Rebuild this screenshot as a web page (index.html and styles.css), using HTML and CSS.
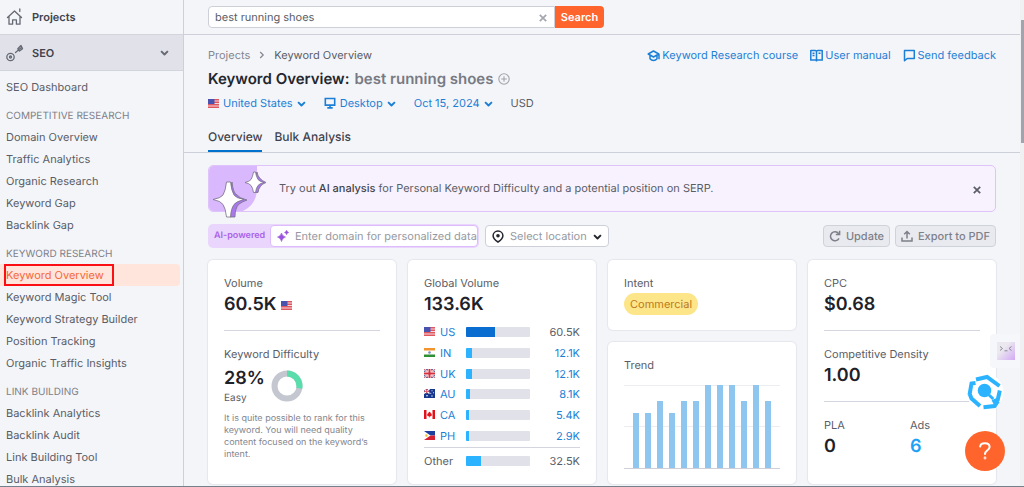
FILE: index.html
```html
<!DOCTYPE html>
<html lang="en">
<head>
<meta charset="utf-8">
<meta name="viewport" content="width=device-width, initial-scale=1">
<title>Keyword Overview: best running shoes</title>
<link rel="stylesheet" href="styles.css">
</head>
<body>
<svg class="defs" aria-hidden="true">
  <symbol id="flag-us" viewBox="0 0 22 18"><path fill="#f4d9dc" d="M0 0h22v18H0z"/><path fill="#e0565f" d="M0 0h22v3H0zM0 5h22v3H0zM0 10h22v3H0zM0 15h22v3H0z"/><path fill="#4a52b0" d="M0 0h13v10H0z"/></symbol>
  <symbol id="flag-in" viewBox="0 0 22 18"><path fill="#fff" d="M0 0h22v18H0z"/><path fill="#f3952f" d="M0 0h22v5H0z"/><path fill="#2f8f35" d="M0 13h22v5H0z"/><circle cx="11" cy="9" r="2.6" fill="#7a8cc4"/></symbol>
  <symbol id="flag-uk" viewBox="0 0 22 18"><path fill="#2c3f86" d="M0 0h22v18H0z"/><path stroke="#fff" stroke-width="4" d="M0 0l22 18M22 0L0 18"/><path stroke="#d3313f" stroke-width="1.6" d="M0 0l22 18M22 0L0 18"/><path stroke="#fff" stroke-width="7" d="M11 0v18M0 9h22"/><path stroke="#d3313f" stroke-width="4" d="M11 0v18M0 9h22"/></symbol>
  <symbol id="flag-au" viewBox="0 0 22 18"><path fill="#16378e" d="M0 0h22v18H0z"/><path stroke="#fff" stroke-width="3" d="M0 0l11 9M11 0L0 9"/><path stroke="#e05260" stroke-width="2" d="M5.500 0v9M0 4.500h11"/><g fill="#fff"><circle cx="6" cy="13.500" r="1.600"/><circle cx="16" cy="3.500" r="1.200"/><circle cx="19" cy="7.500" r="1.200"/><circle cx="13.500" cy="8.500" r="1.100"/><circle cx="16" cy="14" r="1.300"/></g></symbol>
  <symbol id="flag-ca" viewBox="0 0 22 18"><path fill="#fff" d="M0 0h22v18H0z"/><path fill="#e0131b" d="M0 0h5v18H0zM17 0h5v18h-5zM11 3l1.500 2.500 1.500-.5-.3 3L16 7l-.8 2.500 1 1-3.700 2.500H11.500V15h-1v-2H9.500L5.800 10.500l1-1L6 7l2.300 1-.3-3 1.500.5z"/></symbol>
  <symbol id="flag-ph" viewBox="0 0 22 18"><path fill="#1c3fa0" d="M0 0h22v9H0z"/><path fill="#d52334" d="M0 9h22v9H0z"/><path fill="#fff" d="M0 0l13 9L0 18z"/><circle cx="4.800" cy="9" r="2.400" fill="#f2c230"/></symbol>
  <symbol id="chev" viewBox="0 0 9 6"><path d="M1.100 1.100l3.400 3.400 3.400-3.400" fill="none" stroke="currentColor" stroke-width="1.900" stroke-linejoin="round"/></symbol>
  <symbol id="cross" viewBox="0 0 8 8"><path d="M.8.8l6.400 6.400M7.200.8L.8 7.200" fill="none" stroke="currentColor" stroke-width="1.700"/></symbol>
</svg>

<div class="app">
  <nav class="sidebar" aria-label="Main">
    <a class="section" href="#">
      <svg class="section-icon" viewBox="0 0 18 18" fill="none" stroke="currentColor" stroke-width="1.300" stroke-linecap="round" stroke-linejoin="round"><path d="M1.500 9.500L8.500 3l7 6.500M3 8.500v7.700h3.600v-4.400h3.800v4.400H14V8.500M13.800 1v2.400"/></svg>
      Projects
    </a>
    <a class="section section-open" href="#">
      <svg class="section-icon" viewBox="0 0 18 18" fill="none" stroke="currentColor" stroke-width="1.300" stroke-linecap="round" stroke-linejoin="round"><circle cx="4.500" cy="13" r="3.700"/><circle cx="4.500" cy="13" r="1"/><path d="M9.500 8.500l3-2.500M11.800 4.800l1.700 2.300 3-2.300-1.800-3zM13 5.500l2.500-2M15 1.500l1.500 3"/></svg>
      SEO
      <svg class="section-chev"><use href="#chev"/></svg>
    </a>
    <ul class="menu">
      <li><a href="#">SEO Dashboard</a></li>
    </ul>
    <h2 class="menu-title">COMPETITIVE RESEARCH</h2>
    <ul class="menu">
      <li><a href="#">Domain Overview</a></li>
      <li><a href="#">Traffic Analytics</a></li>
      <li><a href="#">Organic Research</a></li>
      <li><a href="#">Keyword Gap</a></li>
      <li><a href="#">Backlink Gap</a></li>
    </ul>
    <h2 class="menu-title">KEYWORD RESEARCH</h2>
    <ul class="menu">
      <li class="current"><a href="#" aria-current="page">Keyword Overview</a></li>
      <li><a href="#">Keyword Magic Tool</a></li>
      <li><a href="#">Keyword Strategy Builder</a></li>
      <li><a href="#">Position Tracking</a></li>
      <li><a href="#">Organic Traffic Insights</a></li>
    </ul>
    <h2 class="menu-title">LINK BUILDING</h2>
    <ul class="menu">
      <li><a href="#">Backlink Analytics</a></li>
      <li><a href="#">Backlink Audit</a></li>
      <li><a href="#">Link Building Tool</a></li>
      <li><a href="#">Bulk Analysis</a></li>
    </ul>
  </nav>

  <main class="main">
    <form class="topbar">
      <div class="search">
        <input class="search-input" type="text" value="best running shoes" aria-label="Keyword">
        <button class="search-clear" type="button" aria-label="Clear"><svg class="i8"><use href="#cross"/></svg></button>
        <button class="search-submit" type="button">Search</button>
      </div>
    </form>

    <header class="head">
      <div class="crumb-row">
        <nav class="crumbs" aria-label="Breadcrumb">
          <a href="#">Projects</a>
          <svg class="crumb-sep" viewBox="0 0 6 8"><path d="M1.200 1l3 3-3 3" fill="none" stroke="currentColor" stroke-width="1.200"/></svg>
          <span>Keyword Overview</span>
        </nav>
        <div class="help-links">
          <a href="#"><svg class="i13" viewBox="0 0 13 13" fill="none" stroke="currentColor" stroke-width="1.500" stroke-linejoin="round"><path d="M1.200 5l5.300-3 5.300 3-5.300 3zM3 6.500v3.300c1.800 2.200 5.200 2.200 7 0V6.500M12 5.200v5"/></svg>Keyword Research course</a>
          <a href="#"><svg class="i13" viewBox="0 0 13 13" fill="none" stroke="currentColor" stroke-width="1.500"><path d="M.8 1.500h4.400q1.300 0 1.300 1v10M12.200 1.500H7.800q-1.300 0-1.300 1M.8 1v10h11.400V1M2.500 4.300h2M2.500 6.500h2M8.500 4.300h2"/></svg>User manual</a>
          <a href="#"><svg class="i13" viewBox="0 0 13 13" fill="none" stroke="currentColor" stroke-width="1.500" stroke-linejoin="round"><path d="M1.500 1.500h9.800v8H4.200l-2.700 2.300z"/></svg>Send feedback</a>
        </div>
      </div>
      <h1 class="title">Keyword Overview: <span>best running shoes</span>
        <svg class="title-add" viewBox="0 0 12 12" fill="none" stroke="currentColor" stroke-width="1.100"><circle cx="6" cy="6" r="5.200"/><path d="M6 3.200v5.600M3.200 6h5.600"/></svg>
      </h1>
      <div class="filters">
        <button type="button"><svg class="flag"><use href="#flag-us"/></svg>United States<svg class="chev"><use href="#chev"/></svg></button>
        <button type="button"><svg class="i12" viewBox="0 0 12 12" fill="none" stroke="currentColor" stroke-width="1.600"><path d="M1.300 1.500h9.400v6.600H1.300zM6 8v2.500M3.300 10.900h5.400"/></svg>Desktop<svg class="chev"><use href="#chev"/></svg></button>
        <button type="button">Oct 15, 2024<svg class="chev"><use href="#chev"/></svg></button>
        <span>USD</span>
      </div>
      <nav class="tabs" aria-label="Views">
        <a class="active" href="#">Overview</a>
        <a href="#">Bulk Analysis</a>
      </nav>
    </header>

    <div class="content">
      <section class="banner">
        <svg class="banner-art" viewBox="0 0 60 54"><path fill="#d9b8fd" d="M5 0h43v22q0 16-14 23H5q-5 0-5-5V5q0-5 5-5z"/><g stroke="#777281" stroke-width=".8" stroke-linejoin="round"><path fill="#a878ec" d="M23 16q1 11 5 13 2 3 10 5-5 2-8 4-4 4-4 13h-5l-2-17z"/><path fill="#fff" d="M17.500 16h4q1 9 3.500 13 2 3 10 4.500-8 2-10 5-3 4-3.500 12.500h-4q-1-9-3.500-12.500Q12 35 4 33.500q8-1.500 10-4.500 2.500-4 3.500-13z"/><path fill="#a878ec" d="M48 6q1 7 9 10.500-7 2.500-8 10h-3l-2-10z"/><path fill="#fff" d="M44.500 6h2q.8 5 2.500 7.500 1.500 2 6 3-4.500 1-6 3-1.700 2-2.500 7h-2q-.8-5-2.500-7-1.500-2-6-3 4.500-1 6-3 1.700-2.500 2.500-7.500z"/></g></svg>
        <p>Try out <strong>AI analysis</strong> for Personal Keyword Difficulty and a potential position on SERP.</p>
        <button class="banner-close" type="button" aria-label="Close"><svg class="i8"><use href="#cross"/></svg></button>
      </section>

      <div class="tools">
        <label class="ai-field">
          <span class="ai-tag">AI-powered</span>
          <span class="ai-box">
            <svg class="i12" viewBox="0 0 12 12" fill="#9b55dd"><path d="M4.500 3q.6 3 4 4-3.400 1-4 4.500Q3.900 8 .5 7q3.400-1 4-4zM9.600.3q.3 1.600 2.100 2.200-1.800.5-2.100 2.200-.3-1.700-2.100-2.200Q9.300 1.900 9.600.3z" stroke="#9b55dd" stroke-width=".6"/></svg>
            <input type="text" placeholder="Enter domain for personalized data">
          </span>
        </label>
        <button class="location" type="button">
          <svg class="pin" viewBox="0 0 12 13"><path d="M6 1.100c2.800 0 4.900 2 4.900 4.700 0 2.300-1.700 4.200-4.900 6.200C2.800 10 1.100 8.100 1.100 5.800 1.100 3.100 3.200 1.100 6 1.100z" fill="none" stroke="currentColor" stroke-width="1.500"/><circle cx="6" cy="5.800" r="1.800" fill="currentColor"/></svg>
          <span>Select location</span>
          <svg class="chev"><use href="#chev"/></svg>
        </button>
        <div class="actions">
          <button type="button"><svg class="i12" viewBox="0 0 12 12" fill="none" stroke="currentColor" stroke-width="1.500"><path d="M10 8.300A4.500 4.500 0 1 1 9.600 3.600M10.600.8v3.700H6.800"/></svg>Update</button>
          <button type="button"><svg class="i12" viewBox="0 0 12 12" fill="none" stroke="currentColor" stroke-width="1.500"><path d="M1 7.500V11h10V7.500M6 8.500V1.800M3.200 4.300L6 1.500l2.800 2.800"/></svg>Export to PDF</button>
        </div>
      </div>

      <div class="cards">
        <section class="card">
          <h3>Volume</h3>
          <p class="value">60.5K <svg class="flag"><use href="#flag-us"/></svg></p>
          <hr>
          <h3>Keyword Difficulty</h3>
          <div class="difficulty">
            <div>
              <p class="value">28%</p>
              <p class="level">Easy</p>
            </div>
            <svg class="donut" viewBox="0 0 32 32" fill="none" stroke-width="6"><circle cx="16" cy="16" r="12.500" stroke="#c4c7cf"/><circle cx="16" cy="16" r="12.500" stroke="#59ddaa" pathLength="100" stroke-dasharray="28 72" transform="rotate(-90 16 16)"/></svg>
          </div>
          <p class="note">It is quite possible to rank for this keyword. You will need quality content focused on the keyword’s intent.</p>
        </section>

        <section class="card">
          <h3>Global Volume</h3>
          <p class="value">133.6K</p>
          <table class="countries">
            <tbody>
              <tr class="main-country"><th scope="row"><svg class="flag"><use href="#flag-us"/></svg><a href="#">US</a></th><td class="bar-cell"><div class="bar"><div style="width:45%"></div></div></td><td>60.5K</td></tr>
              <tr><th scope="row"><svg class="flag"><use href="#flag-in"/></svg><a href="#">IN</a></th><td class="bar-cell"><div class="bar"><div style="width:9%"></div></div></td><td><a href="#">12.1K</a></td></tr>
              <tr><th scope="row"><svg class="flag"><use href="#flag-uk"/></svg><a href="#">UK</a></th><td class="bar-cell"><div class="bar"><div style="width:9%"></div></div></td><td><a href="#">12.1K</a></td></tr>
              <tr><th scope="row"><svg class="flag"><use href="#flag-au"/></svg><a href="#">AU</a></th><td class="bar-cell"><div class="bar"><div style="width:6%"></div></div></td><td><a href="#">8.1K</a></td></tr>
              <tr><th scope="row"><svg class="flag"><use href="#flag-ca"/></svg><a href="#">CA</a></th><td class="bar-cell"><div class="bar"><div style="width:4%"></div></div></td><td><a href="#">5.4K</a></td></tr>
              <tr><th scope="row"><svg class="flag"><use href="#flag-ph"/></svg><a href="#">PH</a></th><td class="bar-cell"><div class="bar"><div style="width:4%"></div></div></td><td><a href="#">2.9K</a></td></tr>
            </tbody>
            <tfoot>
              <tr><th scope="row">Other</th><td class="bar-cell"><div class="bar"><div style="width:24%"></div></div></td><td>32.5K</td></tr>
            </tfoot>
          </table>
        </section>

        <div class="stack">
          <section class="card">
            <h3>Intent</h3>
            <span class="intent">Commercial</span>
          </section>
          <section class="card card-trend">
            <h3>Trend</h3>
            <svg class="trend" viewBox="0 0 156 84" preserveAspectRatio="none" role="img" aria-label="Monthly trend">
              <path stroke="#ececf1" d="M0 .5h156M0 41.500h156"/>
              <g fill="#8ec6f0"><path d="M9 28h6v55H9zM21 28h6v55h-6zM33 16h6v67h-6zM45 28h6v55h-6zM57 16h6v67h-6zM69 16h6v67h-6zM81 0h6v83h-6zM93 0h6v83h-6zM105 0h6v83h-6zM117 16h6v67h-6zM129 0h6v83h-6zM141 16h6v67h-6z"/></g>
              <path stroke="#cfcfd8" d="M0 83.500h156"/>
            </svg>
          </section>
        </div>

        <section class="card">
          <h3>CPC</h3>
          <p class="value">$0.68</p>
          <hr>
          <h3>Competitive Density</h3>
          <p class="value">1.00</p>
          <hr>
          <div class="split">
            <div><h3>PLA</h3><p class="value">0</p></div>
            <div><h3>Ads</h3><p class="value"><a href="#">6</a></p></div>
          </div>
        </section>
      </div>
    </div>
  </main>

  <div class="scrollbar" aria-hidden="true"><div class="scroll-thumb"></div></div>

  <div class="floaters">
    <button class="float-tab" type="button" aria-label="Assistant"><svg viewBox="0 0 18 18"><defs><linearGradient id="lilac" x1="0" y1="0" x2="1" y2="1"><stop offset=".35" stop-color="#ebe9ef"/><stop offset="1" stop-color="#d2a9f5"/></linearGradient></defs><path fill="url(#lilac)" d="M0 0h18v18H0z"/><path d="M3 4.500L5.500 6.500 3 8.500M7.500 8.800h3M14.500 4.500L12 6.500l2.500 2" fill="none" stroke="#8b8992"/></svg></button>
    <button class="float-hex" type="button" aria-label="Keyword tools"><svg viewBox="0 0 40 40"><circle cx="20" cy="20" r="18.500" fill="#fff"/><g fill="none" stroke="#2bb3ff" stroke-width="4"><path d="M11 7.500l11-2.500L34.500 14M34.800 18.500l-2 9-5.300 2.500M33 29l-3.500 5-11 1.200M15 34l-8.500-7.500-2-5M4.500 23l2-11.500 4-.5"/></g><circle cx="19.500" cy="18.500" r="6.800" fill="#2bb3ff"/><path d="M24 23l4.300 4" stroke="#2bb3ff" stroke-width="3"/></svg></button>
    <button class="float-help" type="button" aria-label="Help"><svg viewBox="0 0 16 20" fill="none" stroke="#fff" stroke-width="2" stroke-linecap="round"><path d="M3.200 5.500C3.500 1 12.600 1 12.600 6c0 3.200-4.600 3.300-4.600 7"/><circle cx="8" cy="17" r=".4"/></svg></button>
  </div>
</div>
</body>
</html>
```

FILE: styles.css
```css
* { box-sizing: border-box; }

body {
  margin: 0;
  background: #f4f5f9;
  color: #5a5d66;
  font: 11px/14px Inter, "Liberation Sans", sans-serif;
  text-rendering: geometricPrecision;
}

h1, h2, h3, p, ul { margin: 0; padding: 0; font-weight: 400; }
ul { list-style: none; }
a { color: inherit; text-decoration: none; }
button, input { font: inherit; color: inherit; text-rendering: inherit; margin: 0; padding: 0; border: 0; background: none; }
svg { display: block; flex: none; }

.defs { position: absolute; width: 0; height: 0; }
.i8 { width: 8px; height: 8px; }
.i12 { width: 12px; height: 12px; }
.i13 { width: 13px; height: 13px; }
.flag { width: 11px; height: 9px; }
.chev { width: 9px; height: 6px; margin-top: 2px; }

.app {
  display: flex;
  height: 100vh;
  overflow: hidden;
  border-bottom: 1px solid #73818c;
}

/* Sidebar */
.sidebar {
  flex: none;
  width: 184px;
  overflow: hidden;
  border-right: 1px solid #cdd0d8;
}
.section {
  display: flex;
  align-items: center;
  gap: 8px;
  height: 34px;
  padding: 0 14px 0 6px;
  color: #3f424b;
  font-weight: 600;
}
.section-icon { width: 18px; height: 18px; color: #666973; }
.section-open { height: 37px; background: #e0e1e9; border: solid #d3d5dd; border-width: 1px 0; }
.section-chev { width: 9px; height: 6px; margin-left: auto; color: #666973; }
.section-open + .menu { padding-top: 5px; }
.menu a { display: block; height: 22px; padding-left: 6px; line-height: 22px; }
.menu-title { height: 28px; padding: 10px 0 0 6px; color: #7d8089; font-size: 10px; line-height: 16px; }
.current { margin-right: 3px; border-radius: 0 4px 4px 0; background: #ffe5db; color: #f4683a; }
.menu .current a {
  width: 110px;
  margin-left: 4px;
  padding-left: 0;
  border: 2px solid #fb0f15;
  line-height: 18px;
}

/* Top bar */
.main { flex: 1; min-width: 0; }
.topbar { height: 35px; padding: 6px 24px 0; border-bottom: 1px solid #cdd0d8; }
.search { display: flex; max-width: 396px; height: 22px; }
.search-input {
  flex: 1;
  min-width: 0;
  padding: 0 24px 0 6px;
  border: 1px solid #cdd0d8;
  border-radius: 4px 0 0 4px;
  background: #fff;
}
.search-clear { width: 24px; margin-left: -24px; padding: 2px 0 0 8px; color: #a4a7b0; }
.search-submit {
  width: 49px;
  border-radius: 0 4px 4px 0;
  background: #ff642d;
  color: #fff;
  font-weight: 600;
}

/* Page header */
.head { padding: 13px 24px 0; border-bottom: 1px solid #cdd0d8; }
.crumb-row, .crumbs, .help-links, .help-links a, .title, .filters, .filters button, .tabs {
  display: flex;
  align-items: center;
}
.crumb-row { justify-content: space-between; }
.crumbs { gap: 9px; }
.crumbs a, .crumb-sep { color: #83868f; }
.crumb-sep { width: 6px; height: 8px; }
.help-links { gap: 12px; }
.help-links a { gap: 2px; color: #1c7fd6; }
.title { gap: 5px; height: 20px; margin-top: 7px; color: #24262e; font-size: 15px; font-weight: 600; }
.title span { color: #777a83; }
.title-add { width: 12px; height: 12px; color: #a0a3ab; }
.filters { gap: 18px; height: 14px; margin-top: 7px; }
.filters button { gap: 4px; color: #1c7fd6; }
.tabs { gap: 12px; margin-top: 18px; color: #3f424b; font-size: 12px; font-weight: 500; }
.tabs a { height: 24px; border-bottom: 2px solid transparent; line-height: 18px; }
.tabs .active { border-color: #0071cd; }

/* Banner and tools */
.content { padding: 12px 24px 0; }
.banner {
  position: relative;
  display: flex;
  align-items: center;
  justify-content: space-between;
  height: 47px;
  padding: 0 14px 0 70px;
  border: 1px solid #dfc4fb;
  border-radius: 5px;
  background: #f8f2fe;
}
.banner-art { position: absolute; left: 0; top: 0; width: 60px; height: 54px; }
.banner p { padding-bottom: 2px; }
.banner strong { font-weight: 500; color: #3f424b; }
.banner-close { padding-top: 2px; }
.tools { display: flex; align-items: center; gap: 6px; height: 24px; margin-top: 12px; }
.ai-field {
  display: flex;
  align-items: center;
  height: 24px;
  border-radius: 5px;
  background: #ead6fd;
}
.ai-tag { width: 62px; padding-left: 6px; color: #a962e8; font-size: 9px; font-weight: 600; white-space: nowrap; }
.ai-box {
  display: flex;
  align-items: center;
  gap: 6px;
  width: 208px;
  height: 22px;
  margin-right: 1px;
  padding-left: 6px;
  border: 1px solid #dcbcfb;
  border-radius: 4px;
  background: #fff;
}
.ai-box input { flex: 1; min-width: 0; outline: 0; }
.ai-box input::placeholder { color: #9699a2; opacity: 1; }
.location {
  display: flex;
  align-items: center;
  gap: 6px;
  height: 22px;
  padding: 0 6px;
  border: 1px solid #cdd0d8;
  border-radius: 4px;
  background: #fff;
  color: #24262e;
}
.location span { color: #9699a2; }
.pin { width: 12px; height: 13px; }
.actions { display: flex; gap: 5px; margin-left: auto; }
.actions button {
  display: flex;
  align-items: center;
  gap: 5px;
  height: 22px;
  padding: 0 5px;
  border: 1px solid #d0d2da;
  border-radius: 4px;
  background: #e9eaef;
  color: #7d8089;
  font-weight: 500;
}

/* Cards */
.cards { display: grid; grid-template-columns: repeat(4, minmax(0, 1fr)); gap: 12px; margin-top: 12px; }
.card {
  padding: 16px 16px 9px;
  border-radius: 5px;
  background: #fff;
  box-shadow: 0 0 1px 1px #e6e7ed;
}
.card h3 { font-size: 11px; }
.card hr { height: 1px; margin: 13px 0 16px; border: 0; background: #d3d5df; }
.value {
  display: flex;
  align-items: center;
  gap: 5px;
  margin-top: 3px;
  color: #1f2129;
  font-size: 18px;
  font-weight: 600;
  line-height: 24px;
}
.value a { color: #1ba1f5; }
.difficulty { display: flex; align-items: center; gap: 6px; margin-top: 3px; }
.level { font-size: 10px; line-height: 14px; }
.donut { width: 32px; height: 32px; margin-top: 3px; }
.note { margin-top: 8px; color: #83868f; font-size: 9px; line-height: 12px; }

.countries { width: 100%; height: 153px; margin-top: 5px; border-collapse: collapse; }
.countries th, .countries td { padding: 0; font-weight: 400; text-align: right; }
.countries th { width: 42px; text-align: left; }
.countries th .flag { display: inline-block; margin-right: 5px; }
.countries a { color: #1c7fd6; }
.countries tfoot th, .countries tfoot td { height: 28px; border-top: 1px solid #d3d5df; }
.countries .bar-cell { width: 41%; }
.bar { height: 10px; border-radius: 1px; background: #e0e1e9; overflow: hidden; }
.bar div { height: 100%; background: #2bb3ff; }
.main-country .bar div { background: #0a6ed1; }

.stack { display: flex; flex-direction: column; gap: 12px; }
.intent {
  display: inline-block;
  margin-top: 3px;
  padding: 0 6px;
  border-radius: 11px;
  background: #fde58a;
  color: #ba7b1c;
  line-height: 22px;
}
.stack .card { padding-bottom: 15px; }
.card-trend { flex: 1; }
.trend { width: 100%; height: 84px; margin-top: 13px; }
.split { display: grid; grid-template-columns: 86px 1fr; }

/* Scrollbar and floating buttons */
.scrollbar { flex: none; width: 4px; padding: 20px 0 0 1px; background: #f0f0f3; }
.scroll-thumb { height: 123px; background: #a2a4ad; }
.floaters {
  position: absolute;
  right: 0;
  bottom: 16px;
  display: flex;
  flex-direction: column;
  align-items: flex-end;
}
.float-tab {
  width: 30px;
  height: 34px;
  margin-right: 4px;
  padding-left: 7px;
  border-radius: 4px 0 0 4px;
  background: #f6f7fa;
}
.float-tab svg { width: 18px; height: 18px; }
.float-hex { margin: 4px 19px 0 0; }
.float-hex svg { width: 40px; height: 40px; }
.float-help {
  display: grid;
  place-items: center;
  width: 40px;
  height: 40px;
  margin: 19px 19px 0 0;
  border-radius: 50%;
  background: #ff642d;
}
.float-help svg { width: 16px; height: 20px; }
```
